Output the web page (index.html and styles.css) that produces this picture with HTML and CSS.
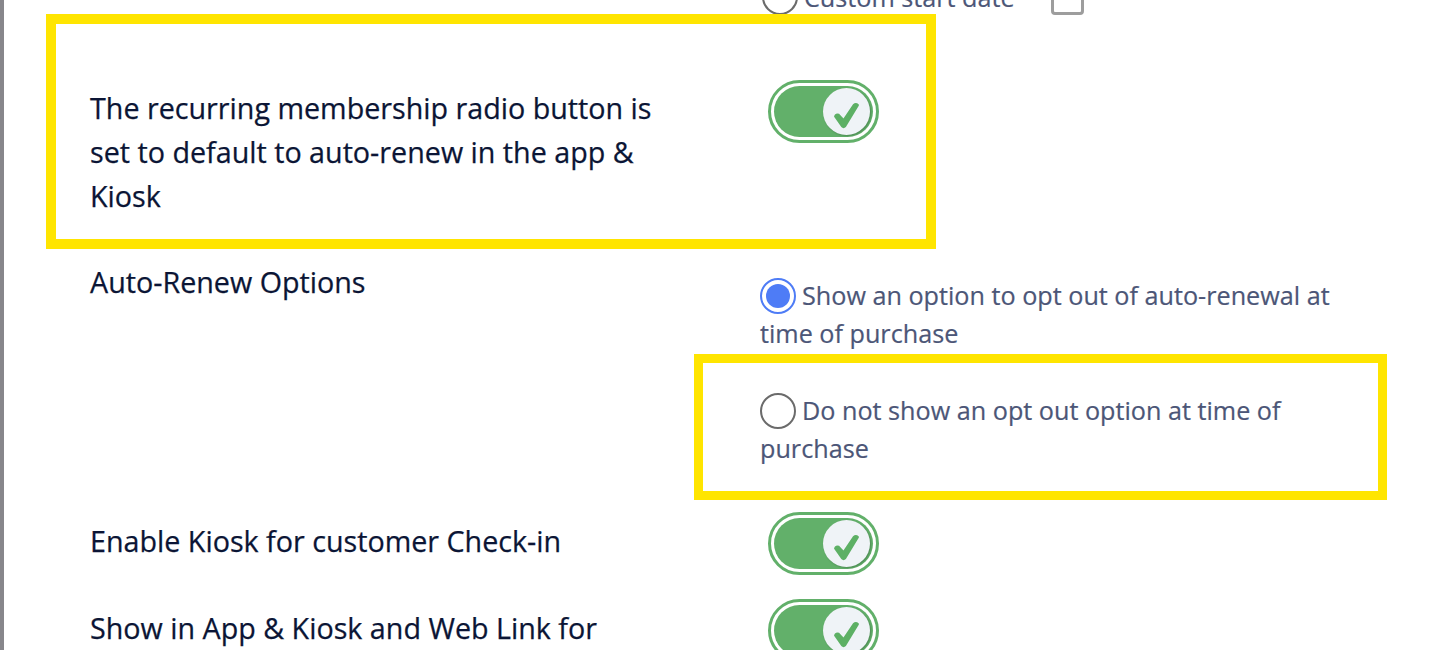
FILE: index.html
```html
<!DOCTYPE html>
<html>
<head>
<meta charset="utf-8">
<link rel="stylesheet" href="styles.css">
</head>
<body>
<div class="page">
  <div class="side-strip"></div>
  <main class="content">
    <div class="row row-custom">
      <div class="label"></div>
      <div class="control custom">
        <span class="radio"></span><span class="opt-text">Custom start date</span>
        <span class="cal-icon"><span class="cal-bar"></span></span>
      </div>
    </div>

    <div class="row row-1">
      <div class="label">The recurring membership radio button is set to default to auto-renew in the app &amp; Kiosk</div>
      <div class="control">
        <div class="toggle"><div class="track"><div class="knob"><svg viewBox="0 0 48 48" width="48" height="48"><path class="check" d="M12.5 28.5 Q13.5 26 16 27 L21 32.5 L31.5 17 Q33.5 15 35.5 17 L22.5 38.5 Q21 40 19.5 38.5 Z"/></svg></div></div></div>
      </div>
    </div>

    <div class="row row-2">
      <div class="label">Auto-Renew Options</div>
      <div class="control options">
        <div class="option option-1"><span class="radio checked"><span class="dot"></span></span><span class="opt-text">Show an option to opt out of auto-renewal at time of purchase</span></div>
        <div class="option option-2"><span class="radio"></span><span class="opt-text">Do not show an opt out option at time of purchase</span></div>
      </div>
    </div>

    <div class="row row-3">
      <div class="label">Enable Kiosk for customer Check-in</div>
      <div class="control">
        <div class="toggle"><div class="track"><div class="knob"><svg viewBox="0 0 48 48" width="48" height="48"><path class="check" d="M12.5 28.5 Q13.5 26 16 27 L21 32.5 L31.5 17 Q33.5 15 35.5 17 L22.5 38.5 Q21 40 19.5 38.5 Z"/></svg></div></div></div>
      </div>
    </div>

    <div class="row row-4">
      <div class="label">Show in App &amp; Kiosk and Web Link for customers</div>
      <div class="control">
        <div class="toggle"><div class="track"><div class="knob"><svg viewBox="0 0 48 48" width="48" height="48"><path class="check" d="M12.5 28.5 Q13.5 26 16 27 L21 32.5 L31.5 17 Q33.5 15 35.5 17 L22.5 38.5 Q21 40 19.5 38.5 Z"/></svg></div></div></div>
      </div>
    </div>
  </main>
  <div class="highlight highlight-1"></div>
  <div class="highlight highlight-2"></div>
</div>
</body>
</html>
```

FILE: styles.css
```css
html, body {
  margin: 0;
  padding: 0;
  background: #ffffff;
  overflow: hidden;
}
.page {
  position: relative;
  display: flex;
  width: 1442px;
  height: 650px;
  overflow: hidden;
  font-family: "Open Sans", "Noto Sans", sans-serif;
}
.side-strip {
  width: 4px;
  flex: none;
  background: #87868b;
}
.content {
  flex: 1;
  padding-left: 86px;
}
.row {
  display: grid;
  grid-template-columns: 670px 640px;
  align-items: start;
}
.label {
  font-size: 28.7px;
  line-height: 44px;
  color: #0b1535;
  width: 585px;
  margin-top: 7px;
  -webkit-text-stroke: 0.25px #0b1535;
}
.opt-text {
  font-size: 25.2px;
  line-height: 38px;
  color: #4c5677;
  -webkit-text-stroke: 0.2px #4c5677;
}
.row-custom {
  margin-top: -22px;
}
.row-custom .label { margin-top: 0; }
.custom {
  display: flex;
  align-items: center;
  gap: 6px;
  padding-left: 2px;
}
.custom .radio { margin-right: 0; vertical-align: middle; }
.cal-icon {
  margin-left: 30px;
  width: 33px;
  height: 34px;
  border: 3px solid #9d9d9d;
  border-radius: 4px;
  box-sizing: border-box;
  margin-top: 2px;
  display: flex;
  justify-content: center;
  padding-top: 10px;
}
.cal-bar {
  width: 9px;
  height: 5px;
  background: #a6a6a6;
}
.row-1 {
  margin-top: 64px;
}
.row-1 .label { margin-top: 6px; }
.row-2 {
  margin-top: 42px;
}
.row-2 .label { margin-top: 0; }
.row-3 {
  margin-top: 45px;
}
.row-4 {
  margin-top: 24px;
}
.toggle {
  width: 111px;
  height: 63px;
  box-sizing: border-box;
  border: 3px solid #62b06a;
  border-radius: 32px;
  padding: 3px;
  margin-left: 8px;
}
.track {
  height: 100%;
  border-radius: 26px;
  background: #62b06a;
  display: flex;
  justify-content: flex-end;
  align-items: center;
  padding: 0 3px;
}
.knob {
  width: 47px;
  height: 47px;
  border-radius: 50%;
  background: #eff3f7;
  box-shadow: 1px 1px 2px rgba(0,0,0,0.22);
  display: flex;
  align-items: center;
  justify-content: center;
  overflow: hidden;
}
.check {
  fill: #5db065;
  stroke: #5db065;
  stroke-width: 2.4;
  stroke-linejoin: round;
}
.options {
  padding-top: 16px;
  width: 600px;
}
.option {
  font-size: 25.2px;
  line-height: 38px;
}
.option-2 {
  margin-top: 39px;
}
.radio {
  display: inline-block;
  width: 36px;
  height: 36px;
  box-sizing: border-box;
  border: 2px solid #6b6b6b;
  border-radius: 50%;
  vertical-align: -9px;
  margin-right: 6px;
}
.radio.checked {
  border-color: #4e7cf6;
}
.dot {
  display: block;
  width: 24px;
  height: 24px;
  margin: 4px;
  border-radius: 50%;
  background: #4e7cf6;
}
.highlight {
  position: absolute;
  border: 10px solid #ffe500;
  box-sizing: border-box;
  pointer-events: none;
}
.highlight-1 {
  left: 46px;
  top: 14px;
  width: 890px;
  height: 235px;
}
.highlight-2 {
  left: 694px;
  top: 354px;
  width: 693px;
  height: 146px;
  border-width: 9px;
}
```
